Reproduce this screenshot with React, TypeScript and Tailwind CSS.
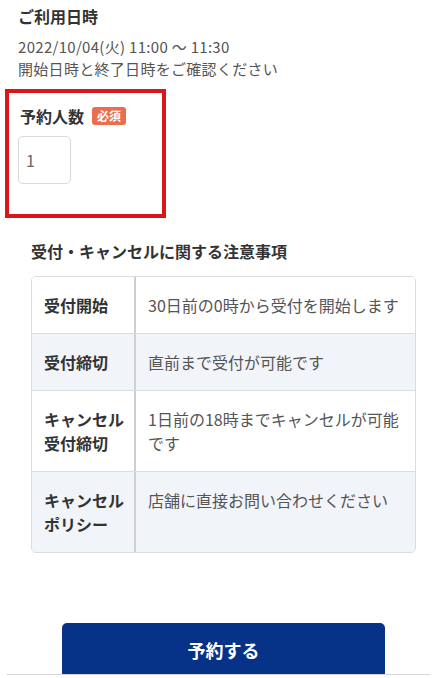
const rows = [
  { head: ["受付開始"], body: "30日前の0時から受付を開始します", alt: false },
  { head: ["受付締切"], body: "直前まで受付が可能です", alt: true },
  { head: ["キャンセル", "受付締切"], body: "1日前の18時までキャンセルが可能です", alt: false },
  { head: ["キャンセル", "ポリシー"], body: "店舗に直接お問い合わせください", alt: true },
];

export default function App() {
  return (
    <div
      className="w-[437px] h-[678px] bg-white text-[#333] overflow-hidden relative"
      style={{ fontFamily: '"Noto Sans CJK JP", "Noto Sans", sans-serif' }}
    >
      {/* Usage date */}
      <div className="pl-[18px] pt-[5px]">
        <h2 className="text-[16px] font-bold leading-[22px]">ご利用日時</h2>
        <div className="mt-[9px] text-[15px] leading-[22px] text-[#555] tracking-[0.3px]">
          <p>2022/10/04(火) 11:00 ～ 11:30</p>
          <p>開始日時と終了日時をご確認ください</p>
        </div>
      </div>

      {/* People count */}
      <div className="ml-[5px] mt-[9px] w-[161px] h-[129px] border-4 border-[#d9161b] pl-[9px] pt-[12px]">
        <div className="flex items-center gap-[8px] pl-[2px]">
          <span className="text-[16px] font-bold leading-[22px]">予約人数</span>
          <span className="bg-[#e96e4f] text-white text-[12px] font-bold leading-[18px] px-[5px] rounded-[3px]">
            必須
          </span>
        </div>
        <div className="mt-[9px] w-[53px] h-[48px] border border-[#d8d8d8] rounded-[5px] flex items-center pl-[7px] text-[16px] text-[#666]">
          1
        </div>
      </div>

      {/* Notes */}
      <div className="px-[31px] pt-[22px]">
        <h3 className="text-[16px] font-bold leading-[22px]">受付・キャンセルに関する注意事項</h3>
        <div className="mt-[14px] w-[385px] border border-[#dcdcdc] rounded-[5px] overflow-hidden">
          {rows.map((row, i) => (
            <div
              key={i}
              className={`flex ${i > 0 ? "border-t border-[#dcdcdc]" : ""} ${
                row.alt ? "bg-[#f1f4f8]" : "bg-white"
              }`}
            >
              <div className="w-[104px] shrink-0 pl-3 pr-1 py-4 text-[16px] font-bold leading-[24px] whitespace-nowrap border-r-2 border-[#cfcfcf]">
                {row.head.map((h) => (
                  <div key={h}>{h}</div>
                ))}
              </div>
              <div className="flex-1 pl-3 pr-2 py-4 text-[16px] leading-[24px] text-[#555]">{row.body}</div>
            </div>
          ))}
        </div>
      </div>

      {/* Submit */}
      <div className="mt-[70px] pl-[62px]">
        <button className="w-[323px] h-[51px] bg-[#063388] text-white text-[18px] font-bold rounded-t-[5px] pt-[4px]">
          予約する
        </button>
      </div>
      <div className="mx-[7px] h-px bg-[#d6d6d6]" />
    </div>
  );
}
